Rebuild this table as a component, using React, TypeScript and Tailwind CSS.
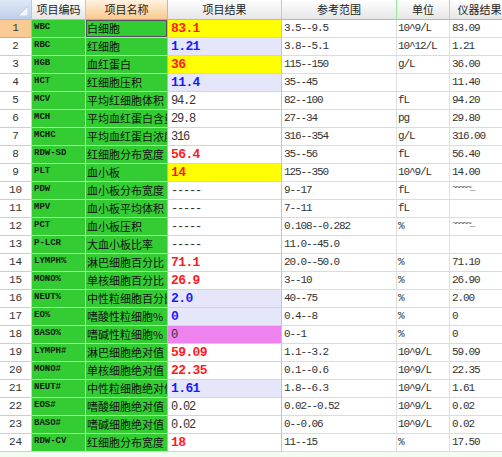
import React from "react";

type Flag = "H" | "L" | "N";

type Row = {
  code: string;
  name: string;
  result: string;
  flag: Flag;
  bg?: "yellow" | "lavender" | "violet";
  range: string;
  unit: string;
  inst: string;
};

const rows: Row[] = [
  { code: "WBC", name: "白细胞", result: "83.1", flag: "H", bg: "yellow", range: "3.5--9.5", unit: "10^9/L", inst: "83.09" },
  { code: "RBC", name: "红细胞", result: "1.21", flag: "L", bg: "lavender", range: "3.8--5.1", unit: "10^12/L", inst: "1.21" },
  { code: "HGB", name: "血红蛋白", result: "36", flag: "H", bg: "yellow", range: "115--150", unit: "g/L", inst: "36.00" },
  { code: "HCT", name: "红细胞压积", result: "11.4", flag: "L", bg: "lavender", range: "35--45", unit: "", inst: "11.40" },
  { code: "MCV", name: "平均红细胞体积", result: "94.2", flag: "N", range: "82--100", unit: "fL", inst: "94.20" },
  { code: "MCH", name: "平均血红蛋白含量", result: "29.8", flag: "N", range: "27--34", unit: "pg", inst: "29.80" },
  { code: "MCHC", name: "平均血红蛋白浓度", result: "316", flag: "N", range: "316--354", unit: "g/L", inst: "316.00" },
  { code: "RDW-SD", name: "红细胞分布宽度", result: "56.4", flag: "H", range: "35--56", unit: "fL", inst: "56.40" },
  { code: "PLT", name: "血小板", result: "14", flag: "H", bg: "yellow", range: "125--350", unit: "10^9/L", inst: "14.00" },
  { code: "PDW", name: "血小板分布宽度", result: "-----", flag: "N", range: "9--17", unit: "fL", inst: "~~~~~_" },
  { code: "MPV", name: "血小板平均体积", result: "-----", flag: "N", range: "7--11", unit: "fL", inst: "" },
  { code: "PCT", name: "血小板压积", result: "-----", flag: "N", range: "0.108--0.282", unit: "%", inst: "~~~~~_" },
  { code: "P-LCR", name: "大血小板比率", result: "-----", flag: "N", range: "11.0--45.0", unit: "", inst: "" },
  { code: "LYMPH%", name: "淋巴细胞百分比", result: "71.1", flag: "H", range: "20.0--50.0", unit: "%", inst: "71.10" },
  { code: "MONO%", name: "单核细胞百分比", result: "26.9", flag: "H", range: "3--10", unit: "%", inst: "26.90" },
  { code: "NEUT%", name: "中性粒细胞百分比", result: "2.0", flag: "L", bg: "lavender", range: "40--75", unit: "%", inst: "2.00" },
  { code: "EO%", name: "嗜酸性粒细胞%", result: "0", flag: "L", bg: "lavender", range: "0.4--8", unit: "%", inst: "0" },
  { code: "BASO%", name: "嗜碱性粒细胞%", result: "0", flag: "N", bg: "violet", range: "0--1", unit: "%", inst: "0" },
  { code: "LYMPH#", name: "淋巴细胞绝对值", result: "59.09", flag: "H", range: "1.1--3.2", unit: "10^9/L", inst: "59.09" },
  { code: "MONO#", name: "单核细胞绝对值", result: "22.35", flag: "H", range: "0.1--0.6", unit: "10^9/L", inst: "22.35" },
  { code: "NEUT#", name: "中性粒细胞绝对值", result: "1.61", flag: "L", bg: "lavender", range: "1.8--6.3", unit: "10^9/L", inst: "1.61" },
  { code: "EOS#", name: "嗜酸细胞绝对值", result: "0.02", flag: "N", range: "0.02--0.52", unit: "10^9/L", inst: "0.02" },
  { code: "BASO#", name: "嗜碱细胞绝对值", result: "0.02", flag: "N", range: "0--0.06", unit: "10^9/L", inst: "0.02" },
  { code: "RDW-CV", name: "红细胞分布宽度", result: "18", flag: "H", range: "11--15", unit: "%", inst: "17.50" },
];

const cjk = "font-['Noto_Sans_CJK_SC','Noto_Sans',sans-serif]";
const mono = "font-['Liberation_Mono','Noto_Sans_CJK_SC',monospace]";

// column widths: row no, code, name, result, range, unit, instrument
const cols = "grid-cols-[32px_54px_82px_114px_115px_53px_60px]";

function resultBg(bg?: Row["bg"]) {
  if (bg === "yellow") return "bg-[#ffff00]";
  if (bg === "lavender") return "bg-[#e6e6fa]";
  if (bg === "violet") return "bg-[#ee82ee]";
  return "bg-white";
}

function resultText(flag: Flag) {
  if (flag === "H") return "text-[#ff1a1a] font-bold text-[13px] tracking-[-0.6px]";
  if (flag === "L") return "text-[#1a1aff] font-bold text-[13px] tracking-[-0.6px]";
  return "text-[#333] text-[12px] tracking-[-1.2px]";
}

function HeaderCell({ label, selected, last }: { label: string; selected?: boolean; last?: boolean }) {
  return (
    <div
      className={`flex h-[20px] items-center justify-center border-b border-r text-[11px] text-[#222] ${cjk} ${
        selected
          ? "border-b-[#e8a050] border-r-[#e8b070] bg-gradient-to-b from-[#fff2e0] to-[#f9c98e]"
          : `border-b-[#b8b8b8] ${last ? "border-r-[#d0d0d0]" : "border-r-[#98e898]"} bg-gradient-to-b from-white to-[#e6e6e6]`
      }`}
    >
      {label}
    </div>
  );
}

export default function App() {
  return (
    <div className="h-[457px] w-[502px] overflow-hidden bg-[#f1fdf1]">
      <div className={`grid ${cols} w-[510px]`}>
        <div className="relative h-[20px] border-b border-r border-b-[#b8b8b8] border-r-[#b8c8e0] bg-gradient-to-b from-[#dfe8f6] to-[#bfd0ec]">
          <svg className="absolute bottom-[3px] right-[3px]" width="10" height="10" viewBox="0 0 10 10">
            <polygon points="10,0 10,10 0,10" fill="#f4f8ff" stroke="#9fb4d8" strokeWidth="0.6" />
          </svg>
        </div>
        <HeaderCell label="项目编码" />
        <HeaderCell label="项目名称" selected />
        <HeaderCell label="项目结果" />
        <HeaderCell label="参考范围" />
        <HeaderCell label="单位" />
        <HeaderCell label="仪器结果" last />

        {rows.map((r, i) => {
          const first = i === 0;
          return (
            <React.Fragment key={r.code + i}>
              <div
                className={`flex h-[18px] items-center justify-center border-b border-r text-[11px] text-[#333] ${mono} ${
                  first
                    ? "border-b-[#e8a860] border-r-[#e8a860] bg-[#f9cb92]"
                    : "border-b-[#a6e8a6] border-r-[#a6e8a6] bg-white"
                }`}
              >
                {i + 1}
              </div>
              <div
                className={`flex h-[18px] items-start overflow-hidden whitespace-nowrap border-b border-r border-b-[#c4dcc4] border-r-[#c4dcc4] bg-[#33cc33] pl-[2px] pt-[2px] text-[9px] leading-[10px] font-bold text-[#102010] ${mono}`}
              >
                {r.code}
              </div>
              <div
                className={`flex h-[18px] items-center overflow-hidden whitespace-nowrap border-b border-r border-b-[#c4dcc4] border-r-[#b8b8b8] bg-[#33cc33] pl-[1px] text-[11px] leading-none text-[#111] ${cjk} ${
                  first ? "shadow-[inset_0_0_0_1px_#5a4a6a]" : ""
                }`}
              >
                {r.name}
              </div>
              <div
                className={`flex h-[18px] items-center overflow-hidden whitespace-nowrap border-b border-r border-b-[#d4d4d4] border-r-[#c4c4c4] pl-[3px] leading-none ${mono} ${resultBg(r.bg)} ${resultText(r.flag)}`}
              >
                {r.result}
              </div>
              <div
                className={`flex h-[18px] items-center overflow-hidden whitespace-nowrap border-b border-r border-b-[#dcdcdc] border-r-[#e0e0e0] bg-white pl-[2px] text-[11px] leading-none tracking-[-1.1px] text-[#333] ${mono}`}
              >
                {r.range}
              </div>
              <div
                className={`flex h-[18px] items-center overflow-hidden whitespace-nowrap border-b border-r border-b-[#dcdcdc] border-r-[#e0e0e0] bg-white pl-[1px] text-[11px] leading-none tracking-[-1.1px] text-[#333] ${mono}`}
              >
                {r.unit}
              </div>
              <div
                className={`flex h-[18px] overflow-hidden whitespace-nowrap border-b border-b-[#dcdcdc] bg-white pl-[2px] leading-none text-[#333] ${mono} ${
                  r.inst.startsWith("~")
                    ? "items-start pt-[2px] text-[9px] tracking-[-1.8px] text-[#555]"
                    : "items-center text-[11px] tracking-[-1.1px]"
                }`}
              >
                {r.inst}
              </div>
            </React.Fragment>
          );
        })}
      </div>
    </div>
  );
}
